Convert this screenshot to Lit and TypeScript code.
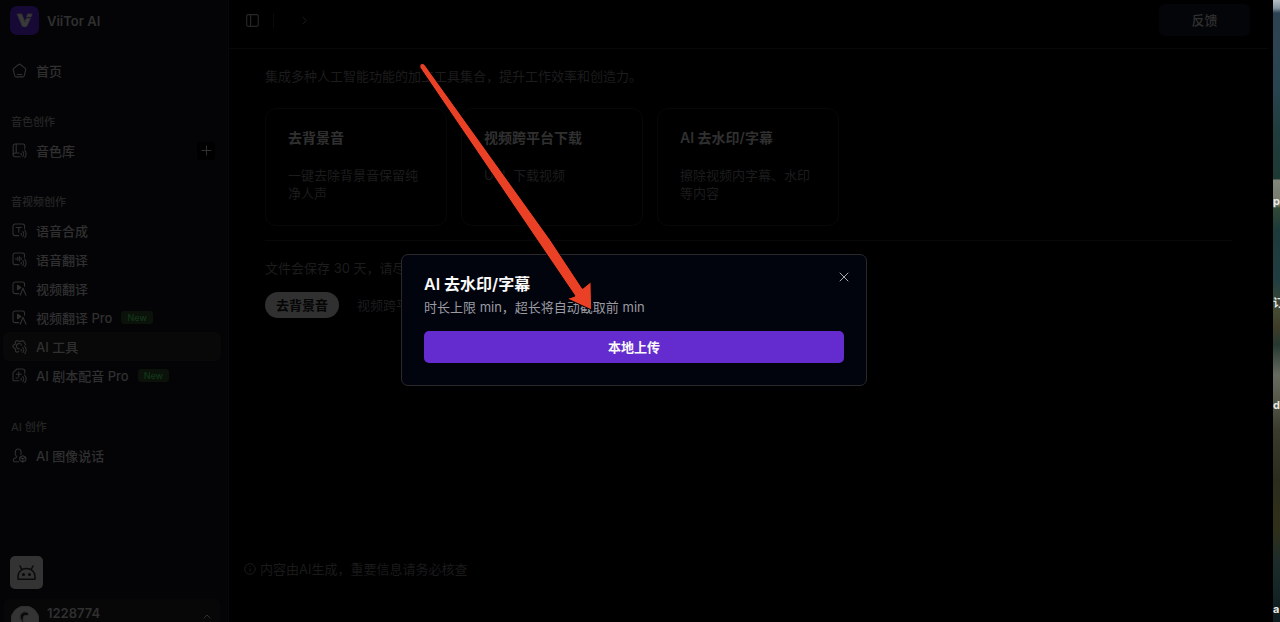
import { LitElement, html, css, svg, nothing } from "lit";
import { customElement, property } from "lit/decorators.js";

const waves = svg`<path d="M9.200 10.200v1.800M10.800 8.700c1.100 1.200 1.100 3.500 0 4.700M12.600 7c2 2.200 2 5.800 0 7.800"/>`;
const frame = svg`<path d="M12.600 5.200V3.200A2.200 2.200 0 0 0 10.400 1H3.200A2.200 2.200 0 0 0 1 3.200v7.200a2.200 2.200 0 0 0 2.200 2.200h3.600"/>`;

const icons: Record<string, unknown> = {
  home: svg`<path d="M6.600 1.500a1.500 1.500 0 0 1 1.800 0l4.800 3.900a1.500 1.500 0 0 1 .5 1.600l-1.500 5.800a1.500 1.500 0 0 1-1.400 1.100H4.200a1.500 1.500 0 0 1-1.400-1.100L1.300 7a1.500 1.500 0 0 1 .5-1.600z"/><path d="M5.300 11.500h4.400"/>`,
  library: svg`<path d="M12.800 5.500V2.500A1.500 1.500 0 0 0 11.300 1H3a1.800 1.800 0 0 0-1.800 1.800v9A1.800 1.800 0 0 0 3 13.800h5"/><path d="M4.200 1v9M1.200 11.800A1.800 1.800 0 0 1 3 10h4"/>${waves}`,
  tts: svg`${frame}<path d="M4.300 4.500h5M6.800 4.500v4.800"/>${waves}`,
  voice: svg`${frame}<path d="M4 6.200v1.200M5.700 5.300v3M7.400 4.600v4.400M9.100 5.500v2"/>${waves}`,
  video: svg`${frame}<path d="M5.500 4.300v4.400l3.500-2.200z" fill="currentColor"/><path d="M8.200 14.300l2.800-7 3 7"/>`,
  tools: svg`<path d="M13.600 5.600L11.900 2.500A1.500 1.500 0 0 0 10.500 1.700L7.400 2.600 5 1.500 3.400 2.400 3.300 5 1 6.500v1.600l2.300 1.600.3 2.700 1.600.8 1.500-.8"/><path d="M9.600 6.100a2.700 2.700 0 1 0-2.600 3.800"/>${waves}`,
  script: svg`<path d="M12.800 5.200V3.200A2.200 2.200 0 0 0 10.600 1H5L1 4.600v7.200a1 1 0 0 0 1 1h5"/><path d="M4.300 6.300h5M6.800 3.900v4.800M4 10h2"/>${waves}`,
  portrait: svg`<path d="M6.700 13.700H2.400c-1.400 0-1.600-2.400 0-3.200l1.400-.7c.9-.5.8-1.200.3-1.900C2.500 5.500 3 1 6 1s3.800 3 2.800 5.600"/><path d="M10.800 7.700l3 1.600v3.200l-3 1.600-3-1.600V9.300zM7.800 9.300l3 1.500 3-1.500M10.800 10.800v3.300"/>`,
};

interface NavEntry { icon: string; text: string; badge?: boolean; active?: boolean; add?: boolean }

const groups: { label?: string; items: NavEntry[] }[] = [
  { items: [{ icon: "home", text: "首页" }] },
  { label: "音色创作", items: [{ icon: "library", text: "音色库", add: true }] },
  {
    label: "音视频创作",
    items: [
      { icon: "tts", text: "语音合成" },
      { icon: "voice", text: "语音翻译" },
      { icon: "video", text: "视频翻译" },
      { icon: "video", text: "视频翻译 Pro", badge: true },
      { icon: "tools", text: "AI 工具", active: true },
      { icon: "script", text: "AI 剧本配音 Pro", badge: true },
    ],
  },
  { label: "AI 创作", items: [{ icon: "portrait", text: "AI 图像说话" }] },
];

const tools = [
  { title: "去背景音", desc: "一键去除背景音保留纯净人声" },
  { title: "视频跨平台下载", desc: "URL 下载视频" },
  { title: "AI 去水印/字幕", desc: "擦除视频内字幕、水印等内容" },
];

const base = css`
  * { box-sizing: border-box; }
  button { font: inherit; color: inherit; border: 0; padding: 0; background: none; cursor: pointer; }
  svg { display: block; fill: none; stroke: currentColor; stroke-linecap: round; stroke-linejoin: round; }
`;

@customElement("side-nav")
class SideNav extends LitElement {
  static styles = [base, css`
    :host {
      display: flex; flex-direction: column; flex: none; width: 229px;
      background: #040406; border-right: 1px solid #08080a; color: #303030;
      font-weight: 500; overflow: hidden;
    }
    .brand { display: flex; align-items: center; gap: 8px; padding: 6px 10px; font-weight: 600; }
    .logo { width: 29px; height: 29px; border-radius: 7px; background: #160935; }
    nav { flex: 1; display: flex; flex-direction: column; gap: 22px; padding: 15px 7px 0 3px; }
    .label { display: flex; align-items: center; height: 29px; padding-left: 8px; font-size: 11px; color: #242424; }
    .row { display: flex; align-items: center; height: 29px; padding-right: 6px; border-radius: 6px; }
    .active { background: #080808; }
    .link { flex: 1; display: flex; align-items: center; gap: 9px; padding-left: 9px; color: inherit; text-decoration: none; white-space: nowrap; }
    .badge { height: 13px; padding: 0 6px; border-radius: 3px; background: #0a120a; color: #14361a; font-size: 9px; line-height: 13px; }
    .add { display: grid; place-items: center; width: 18px; height: 18px; border-radius: 4px; background: #000; }
    .foot { display: flex; flex-direction: column; gap: 10px; padding: 0 8px 0 4px; margin-bottom: -19px; }
    .app { display: grid; place-items: center; width: 33px; height: 33px; margin-left: 6px; border-radius: 5px; background: #333; color: #0b0b0b; }
    .user { display: flex; gap: 8px; height: 42px; padding: 7px 9px 0 7px; border-radius: 6px; background: #070708; font-weight: 600; text-align: left; }
    .name { flex: 1; line-height: 14px; }
    .chev { margin-top: 8px; }
  `];

  row(e: NavEntry) {
    return html`<div class="row ${e.active ? "active" : ""}">
      <a class="link" href="#">
        <svg width="15" height="15" viewBox="0 0 15 15" stroke-width="1.1">${icons[e.icon]}</svg>
        <span>${e.text}</span>
        ${e.badge ? html`<span class="badge">New</span>` : nothing}
      </a>
      ${e.add
        ? html`<button class="add" aria-label="添加"><svg width="11" height="11" viewBox="0 0 11 11"><path d="M5.500 1v9M1 5.500h9" /></svg></button>`
        : nothing}
    </div>`;
  }

  render() {
    return html`
      <div class="brand">
        <svg class="logo" viewBox="0 0 29 29" stroke="none">
          <path fill="#3a3a3a" d="M7.500 8h4.200l3.200 8.200 1.400-3.700h4l-3.400 7.500c-.7 1.200-4 1.200-4.700 0zM18 8h4.200l-1.200 2.900h-4.200z" />
        </svg>
        <span>ViiTor AI</span>
      </div>
      <nav>
        ${groups.map((g) => html`<div>
          ${g.label ? html`<div class="label">${g.label}</div>` : nothing}
          ${g.items.map((i) => this.row(i))}
        </div>`)}
      </nav>
      <div class="foot">
        <button class="app" aria-label="Android">
          <svg width="19" height="16" viewBox="0 0 19 16" stroke-width="1.500">
            <path d="M1 14.300V11a8.500 7.500 0 0 1 17 0v3.300zM5 4.800L3 1M14 4.800L16 1" />
            <circle cx="6.500" cy="9.500" r=".8" fill="currentColor" /><circle cx="12.500" cy="9.500" r=".8" fill="currentColor" />
          </svg>
        </button>
        <button class="user">
          <svg width="28" height="28" viewBox="0 0 28 28" stroke="none">
            <circle cx="14" cy="14" r="14" fill="#343434" />
            <path fill="#0b0b0b" d="M9 11c0-5 6-7 9-3 0 2-3 1-5 2l-1 4 2 5-2 5c-3-1-1-6-1-9-1-1-2-2-2-4z" />
          </svg>
          <span class="name">1228774</span>
          <svg class="chev" width="8" height="12" viewBox="0 0 8 12"><path d="M1 4l3-3 3 3M1 8l3 3 3-3" /></svg>
        </button>
      </div>`;
  }
}

@customElement("tool-card")
class ToolCard extends LitElement {
  @property() heading = "";
  @property() text = "";
  static styles = [base, css`
    :host { display: block; padding: 20px 22px 22px; border: 1px solid #08080a; border-radius: 11px; min-height: 118px; box-sizing: border-box; }
    h3 { margin: 0 0 19px; font-size: 14px; line-height: 18px; font-weight: 600; color: #303030; }
    p { margin: 0; line-height: 18px; color: #1c1c1c; }
  `];
  render() {
    return html`<h3>${this.heading}</h3><p>${this.text}</p>`;
  }
}

@customElement("upload-dialog")
class UploadDialog extends LitElement {
  static styles = [base, css`
    :host { position: relative; display: block; width: 466px; padding: 18px 22px 22px; border: 1px solid #29292c; border-radius: 7px; background: #02040d; box-sizing: border-box; }
    h2 { margin: 0; font-size: 16px; line-height: 22px; font-weight: 600; color: #fafafa; }
    p { margin: 2px 0 14px; line-height: 20px; color: #9b9ba2; }
    .upload { width: 100%; height: 32px; border-radius: 5px; background: #642ccf; color: #fafafa; font-weight: 600; }
    .close { position: absolute; top: 15px; right: 15px; display: grid; place-items: center; width: 14px; height: 14px; color: #a9a9ad; }
  `];
  render() {
    return html`
      <h2>AI 去水印/字幕</h2>
      <p>时长上限 min，超长将自动截取前 min</p>
      <button class="upload">本地上传</button>
      <button class="close" aria-label="关闭"><svg width="10" height="10" viewBox="0 0 10 10"><path d="M1 1l8 8M9 1L1 9" /></svg></button>`;
  }
}

@customElement("app-root")
class AppRoot extends LitElement {
  static styles = [base, css`
    :host {
      position: relative; display: flex; height: 100vh; overflow: hidden; background: #000001;
      font: 13px/18px Inter, "Noto Sans CJK SC", sans-serif;
    }
    .main { flex: 1; min-width: 0; display: flex; flex-direction: column; margin-right: 5px; color: #1c1c1c; }
    header { display: flex; align-items: center; padding: 4px 18px 12px 17px; border-bottom: 1px solid #08080a; }
    .toggle { color: #262626; }
    .sep { width: 1px; height: 15px; margin: 0 28px 0 14px; background: #0a0a0a; }
    .feedback { width: 91px; height: 32px; margin-left: auto; border-radius: 6px; background: #040509; color: #303030; font-weight: 500; }
    .content { padding: 18px 36px 0; }
    p { margin: 0; }
    .cards { display: grid; grid-template-columns: repeat(auto-fill, 182px); gap: 14px; padding: 23px 0 14px; border-bottom: 1px solid #08080a; }
    .keep { padding: 18px 0 15px; }
    .tabs { display: flex; gap: 7px; }
    .tab { height: 26px; padding: 0 11px; border-radius: 13px; white-space: nowrap; }
    .on { background: #303030; color: #050505; font-weight: 600; }
    .note { display: flex; align-items: center; gap: 4px; margin-top: auto; padding: 0 15px 44px; color: #1a1a1a; }
    .wall {
      flex: none; width: 7px; padding-top: 150px; overflow: hidden; color: #e6e8e6; font: bold 11px/102px Inter, "Noto Sans CJK SC", sans-serif;
      background: linear-gradient(#b4bfc7 0, #8796a3 8px, #2c4252 13px, #2d4453 45px, #274451 90px, #203d3d 130px, #1c3934 179px, #82887c 180px, #74796b 205px, #304936 208px, #1d3a3a 230px, #203e42 280px, #454a32 312px, #3f3c28 328px, #263932 345px, #676c60 375px, #56594a 400px, #3a3b2c 430px, #2c2c1e 480px, #303019 530px, #1d2c2b 560px, #0d1b1e 622px);
    }
    .wall div { height: 102px; }
    .layer { position: absolute; inset: 0 12px -18px 0; display: grid; place-items: center; }
    .arrow { position: absolute; top: 60px; left: 415px; pointer-events: none; }
  `];

  render() {
    return html`
      <side-nav></side-nav>
      <div class="main">
        <header>
          <button class="toggle" aria-label="切换侧栏">
            <svg width="13" height="13" viewBox="0 0 13 13" stroke-width="1.200"><rect x=".7" y=".7" width="11.600" height="11.600" rx="1.500" /><path d="M4.600 1v11" /></svg>
          </button>
          <span class="sep"></span>
          <svg width="5" height="9" viewBox="0 0 5 9" color="#1c1c1c"><path d="M.7 1l3.500 3.500L.7 8" /></svg>
          <button class="feedback">反馈</button>
        </header>
        <div class="content">
          <p>集成多种人工智能功能的加工工具集合，提升工作效率和创造力。</p>
          <div class="cards">
            ${tools.map((t) => html`<tool-card .heading=${t.title} .text=${t.desc}></tool-card>`)}
          </div>
          <p class="keep">文件会保存 30 天，请尽快下载</p>
          <div class="tabs">
            ${tools.map((t, i) => html`<button class="tab ${i === 0 ? "on" : ""}">${t.title}</button>`)}
          </div>
        </div>
        <div class="note">
          <svg width="12" height="12" viewBox="0 0 12 12"><circle cx="6" cy="6" r="5.300" /><path d="M6 5.600v2.800M6 3.700v.1" /></svg>
          <span>内容由AI生成，重要信息请务必核查</span>
        </div>
      </div>
      <div class="wall" aria-hidden="true"><div>p</div><div>订</div><div>d</div><div></div><div>a</div></div>
      <div class="layer"><upload-dialog role="dialog" aria-label="AI 去水印/字幕"></upload-dialog></div>
      <svg class="arrow" width="190" height="255" viewBox="415 60 190 255" stroke="none">
        <path fill="#ea4025" d="M420 67.500Q419 64 422 63.500Q424 63.500 425 65L550.500 240L582.500 288.500L591 281.700L591.700 310L567 298.700L575 296L537 240Z" />
      </svg>`;
  }
}
